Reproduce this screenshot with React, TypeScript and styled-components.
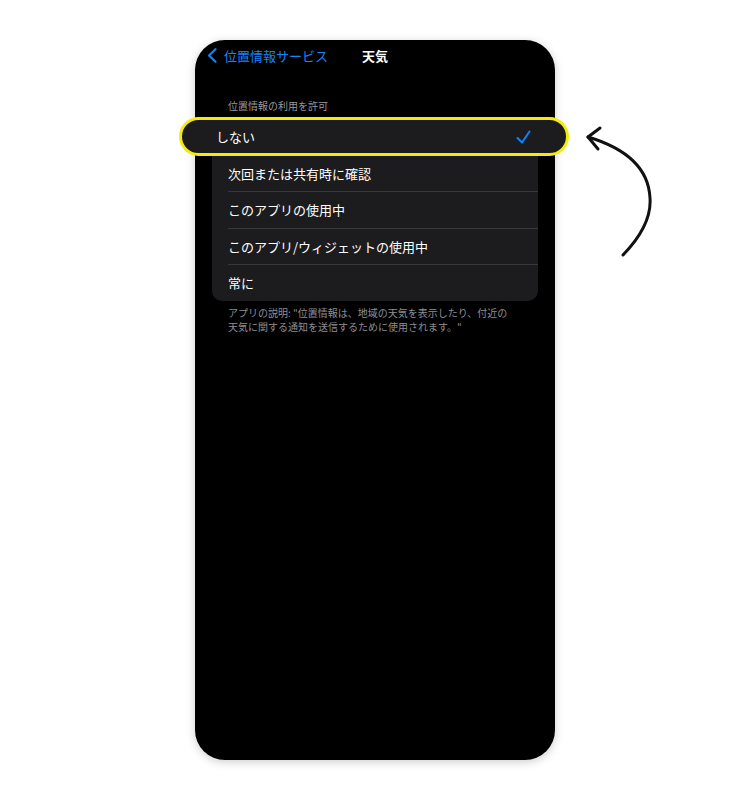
import React from 'react';
import styled, { createGlobalStyle } from 'styled-components';

const GlobalStyle = createGlobalStyle`
	body {
		margin: 0;
		background: #ffffff;
		font-family: 'Noto Sans CJK JP', 'Noto Sans', sans-serif;
		-webkit-font-smoothing: antialiased;
	}
`;

const options = ['次回または共有時に確認', 'このアプリの使用中', 'このアプリ/ウィジェットの使用中', '常に'];

const App: React.FC = () => {
	return (
		<Stage>
			<GlobalStyle />
			<Phone>
				<NavBar>
					<BackButton type="button">
						<svg width="10" height="15" viewBox="0 0 10 15" fill="none">
							<path d="M8.5 1.2 2 7.5l6.5 6.3" stroke="#0a84ff" strokeWidth="2.2" strokeLinecap="round" strokeLinejoin="round" />
						</svg>
						<span>位置情報サービス</span>
					</BackButton>
					<Title>天気</Title>
					<span />
				</NavBar>

				<SectionHeader>位置情報の利用を許可</SectionHeader>
				<Group>
					<SelectedRow>
						<span>しない</span>
						<svg width="15" height="14" viewBox="0 0 15 14" fill="none">
							<path d="M1.5 8 6 12.5 13.5 1.5" stroke="#0a84ff" strokeWidth="2" strokeLinecap="round" strokeLinejoin="round" />
						</svg>
					</SelectedRow>
					{options.map((label, i) => (
						<Row key={label} $last={i === options.length - 1}>
							{label}
						</Row>
					))}
				</Group>
				<SectionFooter>
					アプリの説明: "位置情報は、地域の天気を表示したり、付近の
					<br />
					天気に関する通知を送信するために使用されます。"
				</SectionFooter>
			</Phone>

			<Arrow width="80" height="145" viewBox="0 0 80 145" fill="none">
				<path d="M43 135 Q72 105 70 78 Q68 35 8 17" stroke="#111" strokeWidth="3" strokeLinecap="round" />
				<path d="M20 8 8 17l10 12" stroke="#111" strokeWidth="3" strokeLinecap="round" strokeLinejoin="round" />
			</Arrow>
		</Stage>
	);
};

const Stage = styled.div`
	position: relative;
	width: 750px;
	height: 800px;
	display: flex;
	justify-content: center;
	padding-top: 40px;
	box-sizing: border-box;
`;

const Phone = styled.div`
	width: 360px;
	height: 720px;
	background: #000;
	border-radius: 30px;
	box-shadow: 0 2px 10px rgba(0, 0, 0, 0.2);
	display: flex;
	flex-direction: column;
`;

const NavBar = styled.div`
	height: 30px;
	display: grid;
	grid-template-columns: 1fr auto 1fr;
	align-items: center;
	padding: 0 12px;
`;

const BackButton = styled.button`
	display: flex;
	align-items: center;
	gap: 7px;
	background: transparent;
	border: none;
	padding: 0;
	color: #1a84f5;
	font-family: inherit;
	font-size: 13px;
	font-weight: 400;
	cursor: pointer;
	white-space: nowrap;
	svg {
		flex: none;
	}
`;

const Title = styled.div`
	color: #fff;
	font-size: 13px;
	font-weight: 700;
`;

const SectionHeader = styled.div`
	margin-top: 29px;
	padding-left: 33px;
	color: #98989e;
	font-size: 10px;
	line-height: 14px;
`;

const Group = styled.div`
	margin: 4px 17px 0;
	background: #1c1c1e;
	border-radius: 10px;
`;

const SelectedRow = styled.div`
	position: relative;
	z-index: 1;
	margin: 0 -31px 0 -33px;
	height: 39px;
	box-sizing: border-box;
	border: 3px solid #f4ea0c;
	border-radius: 20px;
	background: #1c1c1e;
	display: flex;
	align-items: center;
	justify-content: space-between;
	padding: 0 35px 0 34px;
	color: #fff;
	font-size: 13px;
	font-weight: 400;
`;

const Row = styled.div<{ $last?: boolean }>`
	margin-left: 16px;
	height: 36.25px;
	box-sizing: border-box;
	display: flex;
	align-items: center;
	color: #fff;
	font-size: 13px;
	font-weight: 400;
	border-bottom: ${({ $last }) => ($last ? 'none' : '1px solid #38383a')};
`;

const SectionFooter = styled.div`
	margin-top: 5px;
	padding-left: 33px;
	color: #8e8e93;
	font-size: 10px;
	line-height: 14px;
`;

const Arrow = styled.svg`
	position: absolute;
	left: 580px;
	top: 120px;
`;

export default App;
